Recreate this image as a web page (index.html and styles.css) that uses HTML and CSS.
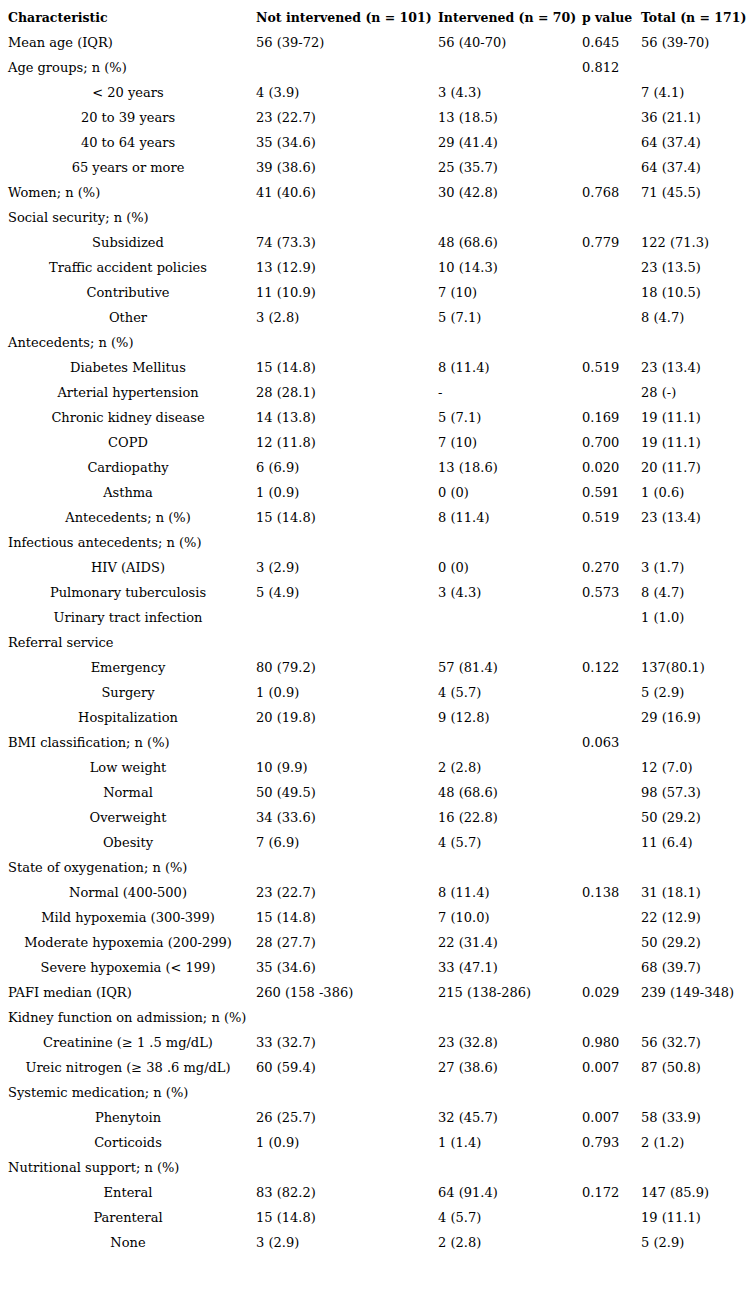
FILE: index.html
```html
<!DOCTYPE html>
<html>
<head>
<meta charset="utf-8">
<link rel="stylesheet" href="styles.css">
</head>
<body>
<table class="tbl">
<colgroup><col class="c1"><col class="c2"><col class="c3"><col class="c4"><col class="c5"></colgroup>
<thead>
<tr><th>Characteristic</th><th>Not intervened (n = 101)</th><th>Intervened (n = 70)</th><th>p value</th><th>Total (n = 171)</th></tr>
</thead>
<tbody>
<tr><td>Mean age (IQR)</td><td>56 (39-72)</td><td>56 (40-70)</td><td>0.645</td><td>56 (39-70)</td></tr>
<tr><td>Age groups; n (%)</td><td></td><td></td><td>0.812</td><td></td></tr>
<tr><td class="sub">&lt; 20 years</td><td>4 (3.9)</td><td>3 (4.3)</td><td></td><td>7 (4.1)</td></tr>
<tr><td class="sub">20 to 39 years</td><td>23 (22.7)</td><td>13 (18.5)</td><td></td><td>36 (21.1)</td></tr>
<tr><td class="sub">40 to 64 years</td><td>35 (34.6)</td><td>29 (41.4)</td><td></td><td>64 (37.4)</td></tr>
<tr><td class="sub">65 years or more</td><td>39 (38.6)</td><td>25 (35.7)</td><td></td><td>64 (37.4)</td></tr>
<tr><td>Women; n (%)</td><td>41 (40.6)</td><td>30 (42.8)</td><td>0.768</td><td>71 (45.5)</td></tr>
<tr><td>Social security; n (%)</td><td></td><td></td><td></td><td></td></tr>
<tr><td class="sub">Subsidized</td><td>74 (73.3)</td><td>48 (68.6)</td><td>0.779</td><td>122 (71.3)</td></tr>
<tr><td class="sub">Traffic accident policies</td><td>13 (12.9)</td><td>10 (14.3)</td><td></td><td>23 (13.5)</td></tr>
<tr><td class="sub">Contributive</td><td>11 (10.9)</td><td>7 (10)</td><td></td><td>18 (10.5)</td></tr>
<tr><td class="sub">Other</td><td>3 (2.8)</td><td>5 (7.1)</td><td></td><td>8 (4.7)</td></tr>
<tr><td>Antecedents; n (%)</td><td></td><td></td><td></td><td></td></tr>
<tr><td class="sub">Diabetes Mellitus</td><td>15 (14.8)</td><td>8 (11.4)</td><td>0.519</td><td>23 (13.4)</td></tr>
<tr><td class="sub">Arterial hypertension</td><td>28 (28.1)</td><td>-</td><td></td><td>28 (-)</td></tr>
<tr><td class="sub">Chronic kidney disease</td><td>14 (13.8)</td><td>5 (7.1)</td><td>0.169</td><td>19 (11.1)</td></tr>
<tr><td class="sub">COPD</td><td>12 (11.8)</td><td>7 (10)</td><td>0.700</td><td>19 (11.1)</td></tr>
<tr><td class="sub">Cardiopathy</td><td>6 (6.9)</td><td>13 (18.6)</td><td>0.020</td><td>20 (11.7)</td></tr>
<tr><td class="sub">Asthma</td><td>1 (0.9)</td><td>0 (0)</td><td>0.591</td><td>1 (0.6)</td></tr>
<tr><td class="sub">Antecedents; n (%)</td><td>15 (14.8)</td><td>8 (11.4)</td><td>0.519</td><td>23 (13.4)</td></tr>
<tr><td>Infectious antecedents; n (%)</td><td></td><td></td><td></td><td></td></tr>
<tr><td class="sub">HIV (AIDS)</td><td>3 (2.9)</td><td>0 (0)</td><td>0.270</td><td>3 (1.7)</td></tr>
<tr><td class="sub">Pulmonary tuberculosis</td><td>5 (4.9)</td><td>3 (4.3)</td><td>0.573</td><td>8 (4.7)</td></tr>
<tr><td class="sub">Urinary tract infection</td><td></td><td></td><td></td><td>1 (1.0)</td></tr>
<tr><td>Referral service</td><td></td><td></td><td></td><td></td></tr>
<tr><td class="sub">Emergency</td><td>80 (79.2)</td><td>57 (81.4)</td><td>0.122</td><td>137(80.1)</td></tr>
<tr><td class="sub">Surgery</td><td>1 (0.9)</td><td>4 (5.7)</td><td></td><td>5 (2.9)</td></tr>
<tr><td class="sub">Hospitalization</td><td>20 (19.8)</td><td>9 (12.8)</td><td></td><td>29 (16.9)</td></tr>
<tr><td>BMI classification; n (%)</td><td></td><td></td><td>0.063</td><td></td></tr>
<tr><td class="sub">Low weight</td><td>10 (9.9)</td><td>2 (2.8)</td><td></td><td>12 (7.0)</td></tr>
<tr><td class="sub">Normal</td><td>50 (49.5)</td><td>48 (68.6)</td><td></td><td>98 (57.3)</td></tr>
<tr><td class="sub">Overweight</td><td>34 (33.6)</td><td>16 (22.8)</td><td></td><td>50 (29.2)</td></tr>
<tr><td class="sub">Obesity</td><td>7 (6.9)</td><td>4 (5.7)</td><td></td><td>11 (6.4)</td></tr>
<tr><td>State of oxygenation; n (%)</td><td></td><td></td><td></td><td></td></tr>
<tr><td class="sub">Normal (400-500)</td><td>23 (22.7)</td><td>8 (11.4)</td><td>0.138</td><td>31 (18.1)</td></tr>
<tr><td class="sub">Mild hypoxemia (300-399)</td><td>15 (14.8)</td><td>7 (10.0)</td><td></td><td>22 (12.9)</td></tr>
<tr><td class="sub">Moderate hypoxemia (200-299)</td><td>28 (27.7)</td><td>22 (31.4)</td><td></td><td>50 (29.2)</td></tr>
<tr><td class="sub">Severe hypoxemia (&lt; 199)</td><td>35 (34.6)</td><td>33 (47.1)</td><td></td><td>68 (39.7)</td></tr>
<tr><td>PAFI median (IQR)</td><td>260 (158 -386)</td><td>215 (138-286)</td><td>0.029</td><td>239 (149-348)</td></tr>
<tr><td>Kidney function on admission; n (%)</td><td></td><td></td><td></td><td></td></tr>
<tr><td class="sub">Creatinine (≥ 1 .5 mg/dL)</td><td>33 (32.7)</td><td>23 (32.8)</td><td>0.980</td><td>56 (32.7)</td></tr>
<tr><td class="sub">Ureic nitrogen (≥ 38 .6 mg/dL)</td><td>60 (59.4)</td><td>27 (38.6)</td><td>0.007</td><td>87 (50.8)</td></tr>
<tr><td>Systemic medication; n (%)</td><td></td><td></td><td></td><td></td></tr>
<tr><td class="sub">Phenytoin</td><td>26 (25.7)</td><td>32 (45.7)</td><td>0.007</td><td>58 (33.9)</td></tr>
<tr><td class="sub">Corticoids</td><td>1 (0.9)</td><td>1 (1.4)</td><td>0.793</td><td>2 (1.2)</td></tr>
<tr><td>Nutritional support; n (%)</td><td></td><td></td><td></td><td></td></tr>
<tr><td class="sub">Enteral</td><td>83 (82.2)</td><td>64 (91.4)</td><td>0.172</td><td>147 (85.9)</td></tr>
<tr><td class="sub">Parenteral</td><td>15 (14.8)</td><td>4 (5.7)</td><td></td><td>19 (11.1)</td></tr>
<tr><td class="sub">None</td><td>3 (2.9)</td><td>2 (2.8)</td><td></td><td>5 (2.9)</td></tr>
</tbody>
</table>
</body>
</html>
```
FILE: styles.css
```css
html, body {
  margin: 0;
  padding: 0;
  background: #fff;
}
body {
  font-family: "DejaVu Serif", serif;
  font-size: 13px;
  color: #000;
}
.tbl {
  border-collapse: collapse;
  table-layout: fixed;
  margin: 5px 0 0 4px;
  width: 752px;
}
.c1 { width: 248px; }
.c2 { width: 182px; }
.c3 { width: 144px; }
.c4 { width: 59px; }
.c5 { width: 119px; }
.tbl th, .tbl td {
  height: 25px;
  padding: 0 4px;
  text-align: left;
  vertical-align: middle;
  white-space: nowrap;
  line-height: 25px;
}
.tbl th {
  font-weight: bold;
  font-size: 12.5px;
}
.tbl td.sub {
  text-align: center;
}
```
